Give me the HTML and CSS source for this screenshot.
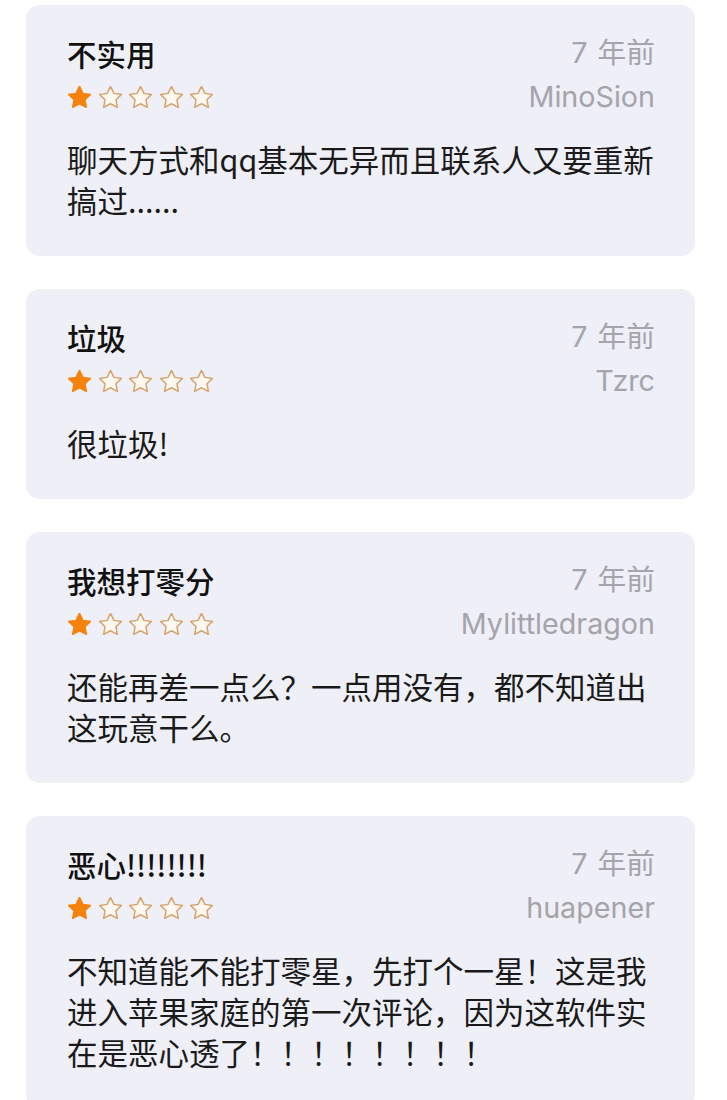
FILE: index.html
```html
<!DOCTYPE html>
<html lang="zh-CN">
<head>
<meta charset="utf-8">
<title>评论</title>
<link rel="stylesheet" href="styles.css">
</head>
<body>
<svg class="defs" width="0" height="0" aria-hidden="true">
  <defs>
    <path id="star" d="M12 2.3l2.95 6.05 6.65.9-4.85 4.65 1.2 6.6L12 17.35 6.05 20.5l1.2-6.6L2.4 9.25l6.65-.9z"/>
  </defs>
</svg>
<main class="review-list">
  <article class="card">
    <div class="row">
      <h2 class="title">不实用</h2>
      <span class="meta">7 年前</span>
    </div>
    <div class="row">
      <div class="stars">
        <svg class="star on" viewBox="2 2 20 19"><use href="#star"/></svg>
        <svg class="star" viewBox="2 2 20 19"><use href="#star"/></svg>
        <svg class="star" viewBox="2 2 20 19"><use href="#star"/></svg>
        <svg class="star" viewBox="2 2 20 19"><use href="#star"/></svg>
        <svg class="star" viewBox="2 2 20 19"><use href="#star"/></svg>
      </div>
      <span class="meta author">MinoSion</span>
    </div>
    <p class="body">聊天方式和qq基本无异而且联系人又要重新搞过......</p>
  </article>

  <article class="card">
    <div class="row">
      <h2 class="title">垃圾</h2>
      <span class="meta">7 年前</span>
    </div>
    <div class="row">
      <div class="stars">
        <svg class="star on" viewBox="2 2 20 19"><use href="#star"/></svg>
        <svg class="star" viewBox="2 2 20 19"><use href="#star"/></svg>
        <svg class="star" viewBox="2 2 20 19"><use href="#star"/></svg>
        <svg class="star" viewBox="2 2 20 19"><use href="#star"/></svg>
        <svg class="star" viewBox="2 2 20 19"><use href="#star"/></svg>
      </div>
      <span class="meta author">Tzrc</span>
    </div>
    <p class="body">很垃圾!</p>
  </article>

  <article class="card">
    <div class="row">
      <h2 class="title">我想打零分</h2>
      <span class="meta">7 年前</span>
    </div>
    <div class="row">
      <div class="stars">
        <svg class="star on" viewBox="2 2 20 19"><use href="#star"/></svg>
        <svg class="star" viewBox="2 2 20 19"><use href="#star"/></svg>
        <svg class="star" viewBox="2 2 20 19"><use href="#star"/></svg>
        <svg class="star" viewBox="2 2 20 19"><use href="#star"/></svg>
        <svg class="star" viewBox="2 2 20 19"><use href="#star"/></svg>
      </div>
      <span class="meta author">Mylittledragon</span>
    </div>
    <p class="body">还能再差一点么？一点用没有，都不知道出这玩意干么。</p>
  </article>

  <article class="card">
    <div class="row">
      <h2 class="title">恶心!!!!!!!!</h2>
      <span class="meta">7 年前</span>
    </div>
    <div class="row">
      <div class="stars">
        <svg class="star on" viewBox="2 2 20 19"><use href="#star"/></svg>
        <svg class="star" viewBox="2 2 20 19"><use href="#star"/></svg>
        <svg class="star" viewBox="2 2 20 19"><use href="#star"/></svg>
        <svg class="star" viewBox="2 2 20 19"><use href="#star"/></svg>
        <svg class="star" viewBox="2 2 20 19"><use href="#star"/></svg>
      </div>
      <span class="meta author">huapener</span>
    </div>
    <p class="body">不知道能不能打零星，先打个一星！这是我进入苹果家庭的第一次评论，因为这软件实在是恶心透了！！！！！！！！</p>
  </article>
</main>
</body>
</html>
```

FILE: styles.css
```css
html, body {
  margin: 0;
  padding: 0;
  background: #ffffff;
}

body {
  font-family: Inter, "Noto Sans CJK SC", "Noto Sans", sans-serif;
  color: #111111;
}

.defs {
  position: absolute;
  width: 0;
  height: 0;
  overflow: hidden;
}

.review-list {
  display: flex;
  flex-direction: column;
  gap: 33px;
  padding: 5px 32px 0 26px;
}

.card {
  background: #efeff7;
  border-radius: 14px;
  padding: 27px 40px 35px 41px;
}

.row {
  display: flex;
  align-items: center;
  justify-content: space-between;
}

.row + .row {
  height: 45px;
}

.title {
  margin: 0;
  font-family: "Noto Sans CJK SC", sans-serif;
  font-size: 29.5px;
  font-weight: 500;
  line-height: 42px;
  color: #111111;
}

.meta {
  font-family: Inter, "Noto Sans CJK SC", sans-serif;
  font-size: 28.7px;
  font-weight: 400;
  line-height: 42px;
  color: #a4a4aa;
  word-spacing: 2px;
}

.stars {
  display: flex;
  gap: 7.5px;
  padding-left: 1px;
}

.star {
  width: 23px;
  height: 22px;
  fill: #fdf8f0;
  stroke: #d5a46e;
  stroke-width: 1.3;
  stroke-linejoin: round;
}

.star.on {
  fill: #f5820c;
  stroke: #f5820c;
}

.body {
  margin: 20px 0 0;
  font-family: "Noto Sans CJK SC", sans-serif;
  font-size: 30.5px;
  line-height: 41px;
  color: #1a1a1a;
}
```
